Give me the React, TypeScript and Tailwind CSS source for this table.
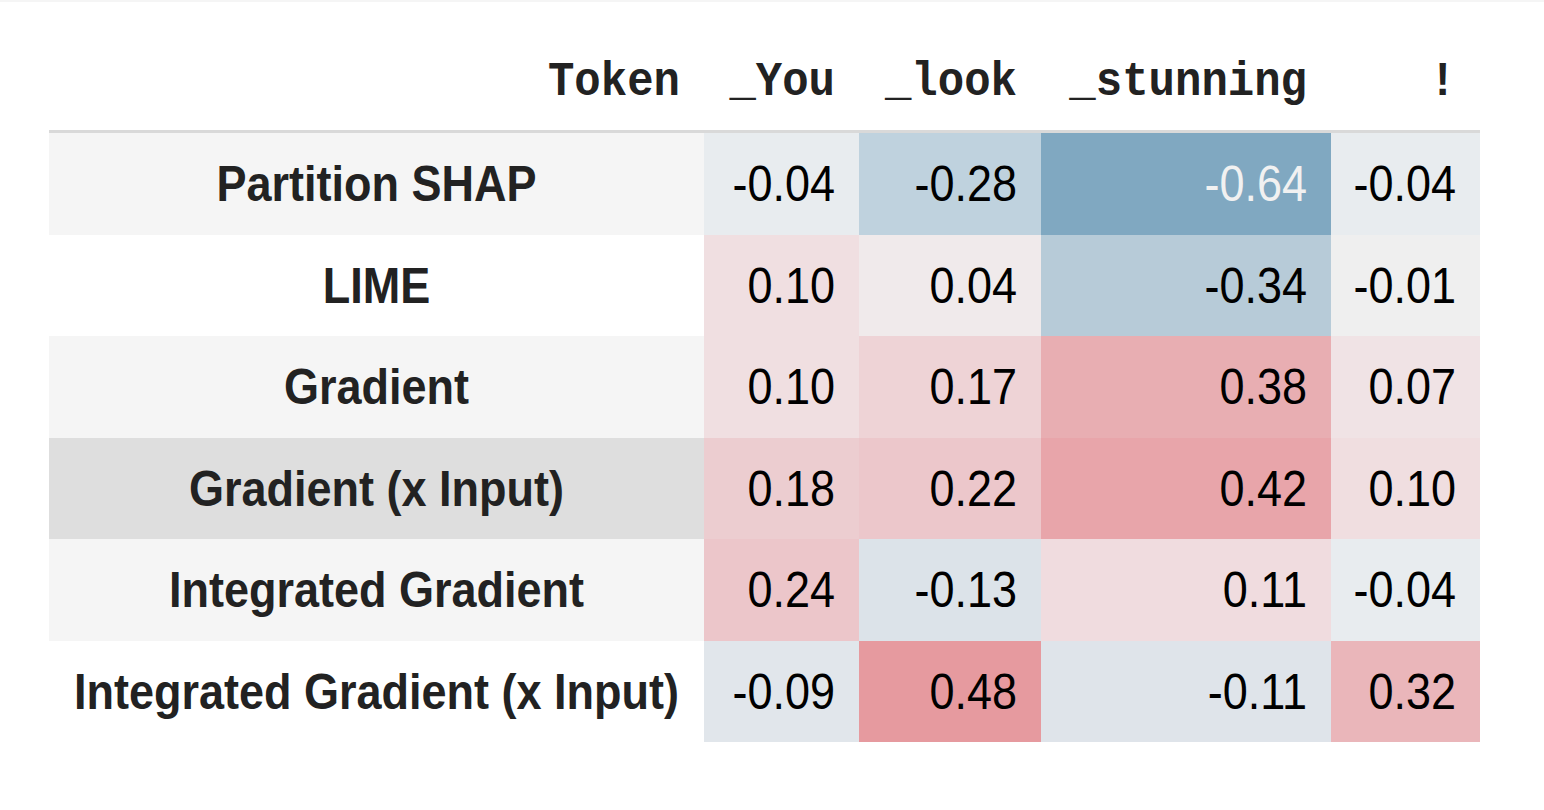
const TOKENS = ["_You", "_look", "_stunning", "!"];

type Row = { label: string; values: number[]; colors: string[]; labelBg: string };

const ROWS: Row[] = [
  {
    label: "Partition SHAP",
    values: [-0.04, -0.28, -0.64, -0.04],
    colors: ["bg-[#e8ecef]", "bg-[#bfd2de]", "bg-[#80a8c1]", "bg-[#e8ecef]"],
    labelBg: "bg-[#f5f5f5]",
  },
  {
    label: "LIME",
    values: [0.1, 0.04, -0.34, -0.01],
    colors: ["bg-[#f0dfe1]", "bg-[#f0eaeb]", "bg-[#b7cbd8]", "bg-[#efefef]"],
    labelBg: "bg-white",
  },
  {
    label: "Gradient",
    values: [0.1, 0.17, 0.38, 0.07],
    colors: ["bg-[#f0dfe1]", "bg-[#eed3d6]", "bg-[#e8aeb2]", "bg-[#f0e3e5]"],
    labelBg: "bg-[#f5f5f5]",
  },
  {
    label: "Gradient (x Input)",
    values: [0.18, 0.22, 0.42, 0.1],
    colors: ["bg-[#eccdd0]", "bg-[#ecc7cb]", "bg-[#e8a5aa]", "bg-[#f0dee0]"],
    labelBg: "bg-[#dedede]",
  },
  {
    label: "Integrated Gradient",
    values: [0.24, -0.13, 0.11, -0.04],
    colors: ["bg-[#ecc6ca]", "bg-[#dce3e9]", "bg-[#f0dcdf]", "bg-[#e8ecef]"],
    labelBg: "bg-[#f5f5f5]",
  },
  {
    label: "Integrated Gradient (x Input)",
    values: [-0.09, 0.48, -0.11, 0.32],
    colors: ["bg-[#e1e6eb]", "bg-[#e69a9f]", "bg-[#dfe4ea]", "bg-[#eab6ba]"],
    labelBg: "bg-white",
  },
];

const GRID = "grid w-[1431px] grid-cols-[655px_155px_182px_290px_149px]";

export default function App() {
  return (
    <div className="min-h-[810px] w-[1544px] bg-white">
      <div className="h-[2px] bg-[#f5f5f5]" />
      <div className="pl-[49px] pt-[40px]">
        <div
          className={`${GRID} h-[91px] items-start border-b-[3px] border-[#d9d9d9] pt-[7px] text-[44px] font-bold text-[#222]`}
          style={{ fontFamily: '"Liberation Mono", "Courier New", monospace' }}
        >
          <div className="pr-[24px] text-right">
            <span className="inline-block scale-y-110">Token</span>
          </div>
          {TOKENS.map((t) => (
            <div key={t} className="pr-[24px] text-right">
              <span className="inline-block scale-y-110">{t}</span>
            </div>
          ))}
        </div>
        {ROWS.map((r) => (
          <div
            key={r.label}
            className={`${GRID} h-[101.5px] text-[45px]`}
            style={{ fontFamily: '"Liberation Sans", Arial, sans-serif' }}
          >
            <div className={`${r.labelBg} flex items-center justify-center font-bold text-[#222]`}>
              <span className="inline-block scale-y-110">{r.label}</span>
            </div>
            {r.values.map((v, i) => (
              <div
                key={i}
                className={`${r.colors[i]} flex items-center justify-end pr-[24px] ${
                  v <= -0.5 ? "text-[#f1f1f1]" : "text-black"
                }`}
              >
                <span className="inline-block scale-y-110">{v.toFixed(2)}</span>
              </div>
            ))}
          </div>
        ))}
      </div>
    </div>
  );
}
